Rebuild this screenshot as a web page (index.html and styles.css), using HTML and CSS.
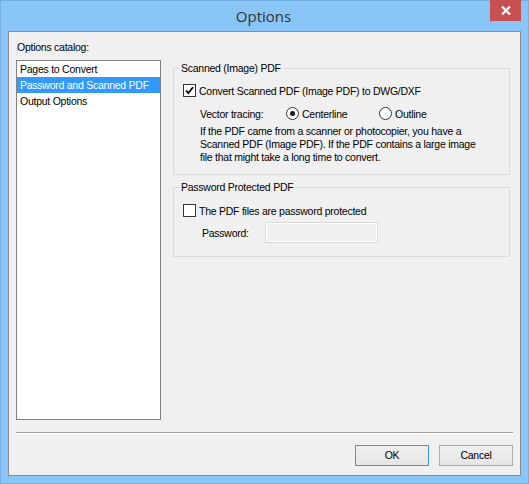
FILE: index.html
```html
<!DOCTYPE html>
<html lang="en">
<head>
    <meta charset="UTF-8">
    <title>Options</title>
    <link rel="stylesheet" href="styles.css">
</head>
<body>
    <div class="window">
        <div class="titlebar">
            <span class="title">Options</span>
            <div class="close">
                <svg width="10" height="9" viewBox="0 0 10 9">
                    <path d="M1 0.5 L9 8.5 M9 0.5 L1 8.5" stroke="#fff" stroke-width="2.2"/>
                </svg>
            </div>
        </div>
        <div class="client">
            <div class="main">
                <div class="catalog">
                    <div class="caption">Options catalog:</div>
                    <ul class="list">
                        <li>Pages to Convert</li>
                        <li class="selected">Password and Scanned PDF</li>
                        <li>Output Options</li>
                    </ul>
                </div>
                <div class="pages">
                    <fieldset class="group group-scanned">
                        <legend>Scanned (Image) PDF</legend>
                        <div class="check-row">
                            <span class="checkbox">
                                <svg width="11" height="11" viewBox="0 0 11 11">
                                    <path d="M2 5.5 L4.3 8 L9 2.2" fill="none" stroke="#000" stroke-width="1.8"/>
                                </svg>
                            </span>
                            <span>Convert Scanned PDF (Image PDF) to DWG/DXF</span>
                        </div>
                        <div class="tracing-row">
                            <span class="tracing-label">Vector tracing:</span>
                            <span class="option option-center"><span class="radio checked"></span>Centerline</span>
                            <span class="option"><span class="radio"></span>Outline</span>
                        </div>
                        <p class="note">If the PDF came from a scanner or photocopier, you have a<br>Scanned PDF (Image PDF). If the PDF contains a large image<br>file that might take a long time to convert.</p>
                    </fieldset>
                    <fieldset class="group group-password">
                        <legend>Password Protected PDF</legend>
                        <div class="check-row">
                            <span class="checkbox"></span>
                            <span>The PDF files are password protected</span>
                        </div>
                        <div class="password-row">
                            <span class="password-label">Password:</span>
                            <span class="textbox"></span>
                        </div>
                    </fieldset>
                </div>
            </div>
            <div class="separator"></div>
            <div class="buttons">
                <div class="button default">OK</div>
                <div class="button">Cancel</div>
            </div>
        </div>
    </div>
</body>
</html>
```

FILE: styles.css
```css
body {
    margin: 0;
    font-family: "Liberation Sans", Arial, sans-serif;
    font-size: 10.5px;
    letter-spacing: -0.25px;
    color: #000;
}
.window {
    width: 529px;
    height: 484px;
    box-sizing: border-box;
    background-color: #8ac5f7;
    border: 1px solid #76b0e2;
    display: flex;
    flex-direction: column;
    position: relative;
}
.titlebar {
    height: 30px;
    display: flex;
    justify-content: center;
    align-items: center;
}
.title {
    font-family: "Open Sans", "Noto Sans", sans-serif;
    font-size: 15px;
    letter-spacing: 0;
    color: #333;
    margin-left: -2px;
}
.close {
    position: absolute;
    top: -1px;
    right: 7px;
    width: 31px;
    height: 21px;
    background-color: #c75050;
    display: flex;
    justify-content: center;
    align-items: center;
}
.client {
    flex: 1;
    margin: 0 7px 7px 7px;
    border: 1px solid #8c8c8c;
    background-color: #f0f0f0;
    display: flex;
    flex-direction: column;
}
.main {
    display: flex;
    padding: 9px 10px 0 7px;
}
.catalog {
    width: 145px;
}
.caption {
    line-height: 13px;
    padding-left: 1px;
    margin-bottom: 6px;
}
.list {
    list-style: none;
    margin: 0;
    padding: 0;
    height: 358px;
    background-color: #fff;
    border: 1px solid #828282;
}
.list li {
    height: 16px;
    line-height: 16px;
    padding-left: 3px;
    white-space: nowrap;
}
.list li.selected {
    background-color: #3399ff;
    color: #fff;
}
.pages {
    flex: 1;
    margin-left: 12px;
}
.group {
    margin: 21px 0 0 0;
    padding: 0 0 0 9px;
    border: 1px solid #dcdcdc;
    min-width: 0;
}
.group legend {
    margin-left: -4px;
    padding: 0 2px;
    line-height: 13px;
}
.group-scanned {
    padding-bottom: 10px;
}
.group-password {
    margin-top: 6px;
    padding-bottom: 13px;
}
.check-row {
    display: flex;
    align-items: center;
    height: 17px;
    margin-top: 7px;
    white-space: nowrap;
}
.group-password .check-row {
    margin-top: 8px;
}
.checkbox {
    width: 11px;
    height: 11px;
    border: 1px solid #333;
    background-color: #fff;
    margin-right: 3px;
    display: flex;
}
.tracing-row {
    display: flex;
    align-items: center;
    height: 13px;
    margin-top: 8px;
    padding-left: 17px;
    white-space: nowrap;
}
.tracing-label {
    width: 86px;
}
.option {
    display: flex;
    align-items: center;
}
.option-center {
    width: 93px;
}
.radio {
    width: 11px;
    height: 11px;
    border: 1px solid #333;
    border-radius: 50%;
    background-color: #fff;
    margin-right: 3px;
    display: flex;
    justify-content: center;
    align-items: center;
}
.radio.checked::after {
    content: "";
    width: 5px;
    height: 5px;
    border-radius: 50%;
    background-color: #1a1a1a;
}
.note {
    margin: 5px 0 0 0;
    padding-left: 17px;
    line-height: 13px;
    white-space: nowrap;
}
.password-row {
    display: flex;
    align-items: center;
    margin-top: 3px;
    padding-left: 19px;
}
.password-label {
    width: 63px;
}
.textbox {
    width: 111px;
    height: 19px;
    border: 1px solid #d9d9d9;
    box-shadow: inset 0 0 0 1px #fff;
    background-color: #f0f0f0;
}
.separator {
    margin: 12px 7px 0 7px;
    height: 1px;
    background-color: #a0a0a0;
    border-bottom: 1px solid #fff;
}
.buttons {
    display: flex;
    justify-content: flex-end;
    gap: 10px;
    margin-top: 11px;
    padding-right: 7px;
}
.button {
    width: 72px;
    height: 19px;
    line-height: 19px;
    text-align: center;
    border: 1px solid #acacac;
    background: linear-gradient(#f0f0f0, #e5e5e5);
}
.button.default {
    border-color: #3399ff;
}
```
